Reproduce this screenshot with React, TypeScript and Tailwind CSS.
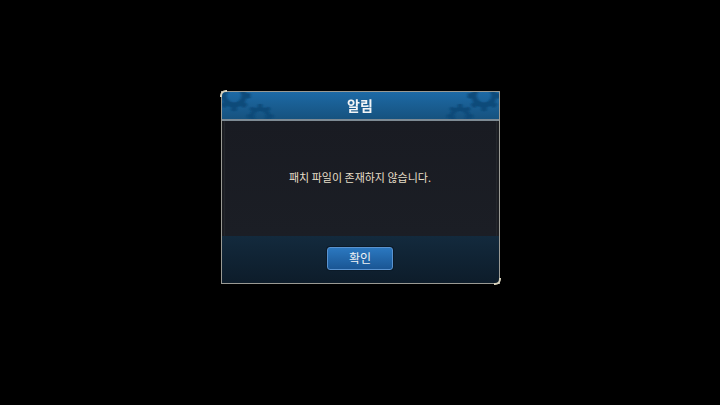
import React from "react";

const gear = (cx: number, cy: number, r: number) => {
    const teeth = [0, 45, 90, 135, 180, 225, 270, 315];
    return (
        <g key={`${cx}-${cy}`}>
            <circle cx={cx} cy={cy} r={r} stroke="#0f4a78" strokeWidth={r * 0.55} fill="none" />
            {teeth.map(a => (
                <rect
                    key={a}
                    x={cx - r * 0.28}
                    y={cy - r * 1.65}
                    width={r * 0.56}
                    height={r * 0.6}
                    rx={1.5}
                    fill="#0f4a78"
                    transform={`rotate(${a} ${cx} ${cy})`}
                />
            ))}
        </g>
    );
};

// header pattern: blurry gears in both corners
const HeaderPattern = () => (
    <svg viewBox="0 0 277 29" className="absolute inset-0 h-full w-full" preserveAspectRatio="none">
        <defs>
            <filter id="soft"><feGaussianBlur stdDeviation="0.8" /></filter>
        </defs>
        <g filter="url(#soft)" opacity="0.9">
            {gear(12, 4, 10)}
            {gear(38, 26, 8)}
            {gear(262, 4, 10)}
            {gear(238, 26, 8)}
        </g>
    </svg>
);

export default function App() {
    return (
        <div className="flex h-[405px] w-[720px] items-start justify-center bg-black pt-[91px]" style={{ fontFamily: '"Noto Sans CJK KR", "Noto Sans", sans-serif' }}>
            <div className="relative w-[279px] border border-[#9a9a94] bg-[#1b1d22]">
                <div className="absolute -left-[2px] -top-[2px] z-10 h-[7px] w-[7px] rounded-tl-[6px] border-l-2 border-t-2 border-[#d8d2bc]" />
                <div className="absolute -bottom-[2px] -right-[2px] z-10 h-[7px] w-[7px] rounded-br-[6px] border-b-2 border-r-2 border-[#d8d2bc]" />

                <div className="relative flex h-[29px] items-center justify-center overflow-hidden border-b-2 border-[#7d8a94] bg-gradient-to-b from-[#1d6aa6] to-[#16527f]">
                    <HeaderPattern />
                    <span className="relative text-[14px] font-bold text-[#f2f4f6]">알림</span>
                </div>

                <div className="mx-[2px] flex h-[115px] items-center justify-center border-x border-[#23262c] bg-gradient-to-b from-[#191b22] to-[#1b1e25] pb-[2px] text-[11px] text-[#e6dfc8]">
                    패치 파일이 존재하지 않습니다.
                </div>

                <div className="flex h-[47px] items-center justify-center bg-gradient-to-b from-[#132a3d] to-[#0d1c2a] pb-[3px]">
                    <button className="h-[23px] w-[66px] rounded-[3px] border border-[#5a93cf] bg-gradient-to-b from-[#2b78c0] to-[#1a5694] text-[12px] text-[#f0f2f4] shadow-[0_0_0_1px_#0b1a28]">
                        확인
                    </button>
                </div>
            </div>
        </div>
    );
}
